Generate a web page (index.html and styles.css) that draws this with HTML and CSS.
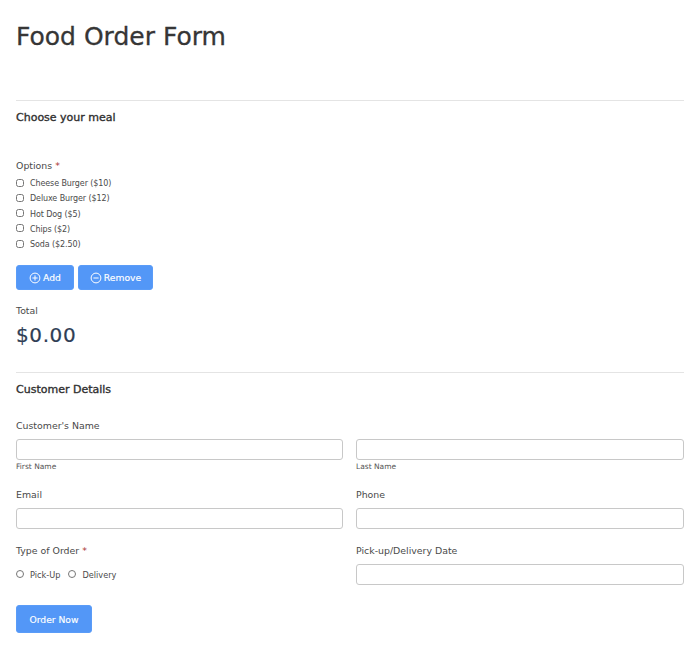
FILE: index.html
```html
<!DOCTYPE html>
<html lang="en">
<head>
<meta charset="utf-8">
<title>Food Order Form</title>
<link rel="stylesheet" href="styles.css">
</head>
<body>
<form class="form">
  <h1 class="title">Food Order Form</h1>
  <section class="section meal">
    <h2 class="section-title">Choose your meal</h2>
    <div class="label options-label">Options <span class="req">*</span></div>
    <div class="checks">
      <label class="check"><input type="checkbox"><span>Cheese Burger ($10)</span></label>
      <label class="check"><input type="checkbox"><span>Deluxe Burger ($12)</span></label>
      <label class="check"><input type="checkbox"><span>Hot Dog ($5)</span></label>
      <label class="check"><input type="checkbox"><span>Chips ($2)</span></label>
      <label class="check"><input type="checkbox"><span>Soda ($2.50)</span></label>
    </div>
    <div class="actions">
      <button type="button" class="btn btn-add">
        <svg class="icon" viewBox="0 0 12 12" aria-hidden="true"><circle cx="6" cy="6" r="4.9"/><path d="M6 3.4v5.2M3.4 6h5.2"/></svg>Add
      </button>
      <button type="button" class="btn btn-remove">
        <svg class="icon" viewBox="0 0 12 12" aria-hidden="true"><circle cx="6" cy="6" r="4.9"/><path d="M3.4 6h5.2"/></svg>Remove
      </button>
    </div>
    <div class="label total-label">Total</div>
    <div class="total">$0.00</div>
  </section>
  <section class="section customer">
    <h2 class="section-title">Customer Details</h2>
    <div class="label name-label">Customer's Name</div>
    <div class="grid name-grid">
      <div><input class="field" type="text"><div class="hint">First Name</div></div>
      <div><input class="field" type="text"><div class="hint">Last Name</div></div>
    </div>
    <div class="grid row-contact">
      <div><div class="label field-label">Email</div><input class="field" type="text"></div>
      <div><div class="label field-label">Phone</div><input class="field" type="text"></div>
    </div>
    <div class="grid row-order">
      <div>
        <div class="label field-label">Type of Order <span class="req">*</span></div>
        <div class="radios">
          <label class="radio"><input type="radio" name="type"><span>Pick-Up</span></label>
          <label class="radio"><input type="radio" name="type"><span>Delivery</span></label>
        </div>
      </div>
      <div><div class="label field-label">Pick-up/Delivery Date</div><input class="field" type="text"></div>
    </div>
  </section>
  <button type="button" class="btn btn-submit">Order Now</button>
</form>
</body>
</html>
```
FILE: styles.css
```css
* { box-sizing: border-box; }
html, body { margin: 0; background: #fff; }
body {
  font-family: "DejaVu Sans", sans-serif;
  color: #4a4a4a;
  font-size: 10px;
}
.form { padding: 19px 16px 0; }
.title {
  margin: 0;
  font-size: 25px;
  line-height: 35px;
  font-weight: 400;
  color: #363636;
  -webkit-text-stroke: 0.3px #363636;
}
.section { border-top: 1px solid #e4e4e4; }
.meal { margin-top: 46px; }
.customer { margin-top: 23px; }
.section-title {
  margin: 9px 0 0;
  font-size: 11px;
  line-height: 15px;
  font-weight: 400;
  color: #2f2f2f;
  -webkit-text-stroke: 0.35px #2f2f2f;
}
.label { font-size: 9.4px; line-height: 14px; color: #4a4a4a; }
.req { color: #a33; }
.options-label { margin-top: 34px; }
.checks { margin-top: 3px; display: flex; flex-direction: column; }
.check { display: flex; align-items: center; height: 15.25px; font-size: 8px; letter-spacing: -0.1px; color: #4a4a4a; }
.check input { width: 8px; height: 8px; margin: 0 6px 2px 0; }
.actions { display: flex; gap: 4px; margin-top: 13px; }
.btn {
  display: inline-flex;
  align-items: center;
  justify-content: center;
  border: 1px solid #5a9cf8;
  border-radius: 3px;
  background: #5397f7;
  color: #fff;
  font-family: inherit;
  font-size: 9.2px;
  -webkit-text-stroke: 0.15px #fff;
  padding: 0;
}
.btn-add { width: 58px; height: 25px; }
.btn-remove { width: 75px; height: 25px; }
.icon { width: 12px; height: 12px; margin-right: 2px; fill: none; stroke: #fff; stroke-width: 1; }
.total-label { margin-top: 14px; }
.total {
  margin-top: 3px;
  font-size: 20px;
  line-height: 28px;
  letter-spacing: 0.6px;
  color: #2f3e55;
  -webkit-text-stroke: 0.2px #2f3e55;
}
.name-label { margin-top: 22px; }
.grid { display: grid; grid-template-columns: 327fr 328fr; gap: 13px; }
.name-grid { margin-top: 6px; }
.field {
  display: block;
  width: 100%;
  height: 21px;
  border: 1px solid #c8c8c8;
  border-radius: 3px;
  background: #fff;
}
.hint { margin-top: 2px; font-size: 7.5px; line-height: 10px; color: #555; }
.row-contact { margin-top: 16px; }
.row-order { margin-top: 15px; }
.field-label { margin-bottom: 6px; }
.radios { display: flex; gap: 8px; margin-top: 11px; }
.radio { display: flex; align-items: center; font-size: 8.2px; line-height: 12px; }
.radio input { width: 8px; height: 8px; margin: 0 6px 2px 0; }
.btn-submit { width: 76px; height: 28px; margin-top: 20px; }
```
